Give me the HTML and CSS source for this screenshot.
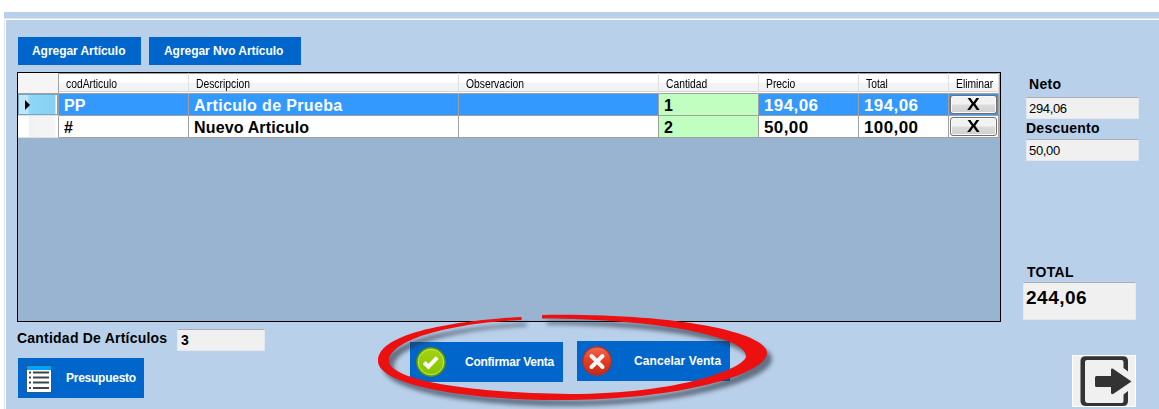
FILE: index.html
```html
<!DOCTYPE html>
<html lang="es">
<head>
<meta charset="utf-8">
<title>Venta</title>
<link rel="stylesheet" href="styles.css">
</head>
<body>
<div class="window">
  <div class="panel">
    <main class="main">
      <div class="toolbar">
        <button class="btn add">Agregar Artículo</button>
        <button class="btn add-new">Agregar Nvo Artículo</button>
      </div>
      <div class="datagrid">
        <div class="row head">
          <span></span><span><em>codArticulo</em></span><span><em>Descripcion</em></span><span><em>Observacion</em></span><span><em>Cantidad</em></span><span><em>Precio</em></span><span><em>Total</em></span><span class="del"><em>Eliminar</em></span>
        </div>
        <div class="row selected">
          <span class="rowhead"><i class="arrow"></i></span><span><b>PP</b></span><span><b class="desc">Articulo de Prueba</b></span><span></span><span class="qty"><b>1</b></span><span><b class="num">194,06</b></span><span><b class="num">194,06</b></span><span class="del"><button class="x"><span class="x-mark">X</span></button></span>
        </div>
        <div class="row">
          <span class="rowhead"></span><span><b>#</b></span><span><b class="desc2">Nuevo Articulo</b></span><span></span><span class="qty"><b>2</b></span><span><b class="num">50,00</b></span><span><b class="num">100,00</b></span><span class="del"><button class="x"><span class="x-mark">X</span></button></span>
        </div>
      </div>
      <div class="footer">
        <div class="left">
          <div class="count"><label class="count-label">Cantidad De Artículos</label><output class="field count-field">3</output></div>
          <button class="btn budget">
            <svg width="26" height="28" viewBox="0 0 26 28"><rect x=".5" y=".5" width="25" height="27" fill="#fff" stroke="#285b80"/><rect x="1" y="1" width="24" height="4" fill="#00a2ff"/><path d="M7 7.500h16M7 12.500h16M7 17.500h16M7 23h16" stroke="#3d4648" stroke-width="1.800"/><path d="M3 7.500h2M3 12.500h2M3 17.500h2M3 23h2" stroke="#3d4648" stroke-width="1.800"/></svg>
            <span>Presupuesto</span>
          </button>
        </div>
        <button class="btn confirm">
          <svg width="32" height="32" viewBox="0 0 32 32"><defs><linearGradient id="g" x2="0" y2="1"><stop stop-color="#a5d313"/><stop offset="1" stop-color="#82c300"/></linearGradient></defs><circle cx="16" cy="16" r="14.2" fill="url(#g)" stroke="#56910f" stroke-width="1.5"/><circle cx="16" cy="16" r="12.7" fill="none" stroke="#c7e35b"/><path d="M9.2 16.5l4.3 4.2 8.700-9" fill="none" stroke="#fff" stroke-width="4"/></svg>
          <span>Confirmar Venta</span>
        </button>
        <button class="btn cancel">
          <svg width="32" height="32" viewBox="0 0 32 32"><defs><linearGradient id="r" x2="0" y2="1"><stop stop-color="#f06a50"/><stop offset=".5" stop-color="#e33c22"/><stop offset="1" stop-color="#c22b18"/></linearGradient></defs><circle cx="16" cy="16" r="14.2" fill="url(#r)" stroke="#b52d20" stroke-width="1.2"/><path d="M10.500 11l11 11M21.500 11l-11 11" stroke="#f5f5f5" stroke-width="4" stroke-linecap="round"/></svg>
          <span>Cancelar Venta</span>
        </button>
      </div>
    </main>
    <aside class="side">
      <label class="net-label">Neto</label>
      <output class="field plain">294,06</output>
      <label class="disc-label">Descuento</label>
      <output class="field plain">50,00</output>
      <label class="total-label">TOTAL</label>
      <output class="field total">244,06</output>
      <button class="exit"><svg width="64" height="52" viewBox="0 0 64 52"><rect x=".5" y=".5" width="63" height="51" fill="#f0f0f0" stroke="#fff"/><path d="M56 16.500L51.500 13V7q0-2-2-2H15q-2 0-2 2v38q0 3 3 3h34q1.500 0 1.500-2v-6.500L56 36v10q0 5-5 5H14q-5.500 0-5.500-5V6q0-4.800 5-4.800H51q5 0 5 4.800z" fill="#333"/><path d="M24.500 21H39v-6q0-2 2-1.200L59.500 26.500 41.500 38.800q-2.500 1-2.500-1V32H24.500q-1.500 0-1.500-1.500v-8q0-1.500 1.500-1.500z" fill="#333"/></svg></button>
    </aside>
  </div>
  <svg class="marker" width="410" height="109" viewBox="370 300 410 109"><path d="M521.500 317C470 320 378 330 378 361C378 384 460 400 560 400C680 400 767 374 767 353C767 333 680 313 542 315V318.500C660 319 746 337 746 356C746 368 680 394 570 394C470 393 389 380 389 361C389 340 450 323 521.500 320Z" fill="#ec1010"/></svg>
</div>
</body>
</html>
```
FILE: styles.css
```css
* { box-sizing: border-box; }
body { margin: 0; background: #fff; font-family: "Liberation Sans", Arial, sans-serif; color: #000; overflow: hidden; }
button { border: 0; padding: 0; font-family: inherit; }
svg { display: block; flex: none; }
.window { position: relative; height: 409px; padding: 12px 0 0 4px; overflow: hidden; }
.panel { height: 397px; display: flex; background: linear-gradient(#b9d0ea 6px, #dce6f0 6px, #dce6f0 7px, #fff 7px, #fff 8px, transparent 8px), linear-gradient(90deg, #dce6f0 1px, #fff 1px, #fff 2px, #b9d0ea 2px); }
.main { width: 984px; margin-left: 13px; padding-top: 25px; flex: none; }
.toolbar { display: flex; gap: 8px; padding-left: 1px; }
.btn { background: #0066cc; color: #fff; font-weight: bold; font-size: 12px; display: flex; align-items: center; white-space: nowrap; }
.add { width: 123px; height: 28px; padding-left: 14px; letter-spacing: -.05px; }
.add-new { width: 152px; height: 28px; padding-left: 15px; letter-spacing: -.05px; }
.datagrid { margin-top: 7px; height: 250px; border: 1px solid #000; background: #99b4d1; }
.row { display: grid; width: 981px; grid-template-columns: 41px 130px 270px 200px 100px 100px 90px 50px; height: 22px; background: #fff; }
.row > span { border-right: 1px solid #a0a0a0; border-bottom: 1px solid #a0a0a0; padding-left: 5px; line-height: 23px; white-space: nowrap; overflow: hidden; }
.row b { font-size: 16px; }
.row .desc { letter-spacing: .35px; }
.row .desc2 { letter-spacing: .15px; }
.row .num { font-size: 17px; letter-spacing: .4px; }
.head { height: 21px; background: linear-gradient(#a0a0a0 1px, #fff 1px, #fff 9px, #f3f4f6 10px, #f1f2f4 18px, #d5d5d5 18px, #d5d5d5 19px, #fff 19px); }
.row.head > span { border-right-color: #dedfe1; padding-left: 7px; font-size: 12px; line-height: 22px; }
.head em { display: block; font-style: normal; transform: scaleX(.86); transform-origin: 0 0; }
.row.head > span:first-child { border-right-color: #a0a0a0; background: #f5f5f5; }
.row.selected { background: #3399ff; color: #fff; }
.row > .rowhead { padding: 6px 0 0 7px; border-bottom-color: #e0e0e0; background: linear-gradient(90deg, #fff 10px, #f1f2f4 11px, #f5f5f5 37px, #fff 38px); }
.selected > .rowhead { box-shadow: inset 0 0 0 1px #6fa8c4; background: linear-gradient(90deg, #bfe6f7 10px, #8fd6f7 11px, #86d0f2 37px, #fff 38px); }
.arrow { display: block; border: 5px solid transparent; border-left-color: #000; border-right: 0; }
.row > .qty { background: #c0ffc0; color: #000; }
.row > .del { padding: 1px 1px 0; }
.row.head > .del { padding-left: 7px; padding-top: 0; }
.x { display: block; width: 47px; height: 19px; border: 1px solid #707070; border-radius: 3px; box-shadow: inset 0 0 0 1px #fafafa; background: linear-gradient(#f2f2f2 48%, #dcdcdc 52%, #cfcfcf); font-size: 16px; line-height: 18px; font-weight: bold; color: #000; }
.x-mark { display: block; transform: scaleX(1.2); }
.footer { display: flex; align-items: flex-start; }
.left { width: 393px; padding-top: 7px; }
.count { display: flex; height: 22px; }
label { display: block; font-weight: bold; font-size: 14px; white-space: nowrap; line-height: 16px; }
.count-label { width: 160px; padding-top: 1px; letter-spacing: .22px; }
.field { display: block; background: #f0f0f0; border: 1px solid #e3e8ee; border-top-color: #abadb3; border-radius: 1px; padding-left: 2px; white-space: nowrap; }
.count-field { width: 88px; font-size: 14px; font-weight: bold; line-height: 21px; padding-left: 3px; }
.budget { width: 126px; height: 40px; margin: 7px 0 0 1px; padding-left: 8px; gap: 14px; font-size: 12px; letter-spacing: -.25px; }
.budget svg { margin-top: 2px; }
.confirm { width: 153px; height: 40px; margin-top: 20px; padding-left: 5px; gap: 18px; letter-spacing: -.25px; }
.cancel { width: 153px; height: 40px; margin: 19px 0 0 14px; padding-left: 4px; gap: 21px; letter-spacing: .08px; }
.side { width: 158px; padding: 64px 0 0 25px; }
.side label { letter-spacing: .3px; }
.plain { width: 113px; height: 22px; font-size: 13px; line-height: 21px; letter-spacing: -.35px; }
.side .net-label { height: 21px; padding-left: 3px; }
.side .disc-label { height: 20px; padding-top: 1px; letter-spacing: .25px; }
.total-label { margin: 103px 0 0 1px; height: 18px; }
.total { width: 113px; height: 38px; margin-left: -3px; font-size: 19px; font-weight: bold; line-height: 29px; letter-spacing: .5px; }
.exit { display: block; width: 64px; height: 52px; margin: 35px 0 0 46px; background: none; }
.marker { position: absolute; left: 370px; top: 300px; filter: drop-shadow(5px 6px 2px rgba(40, 50, 65, .6)); }
```
